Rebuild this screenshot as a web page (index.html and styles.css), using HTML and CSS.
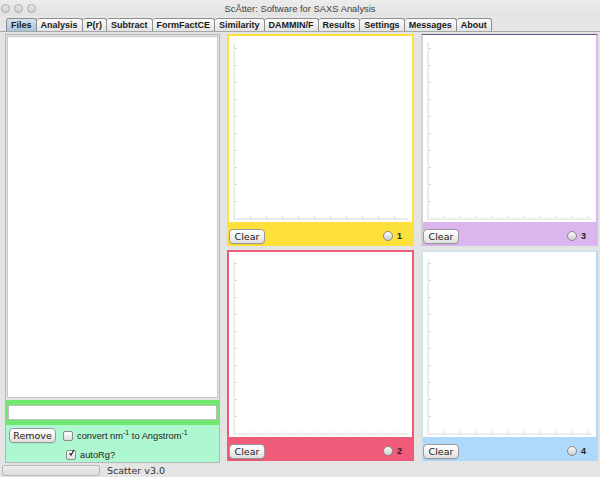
FILE: index.html
```html
<!DOCTYPE html>
<html>
<head>
<meta charset="utf-8">
<link rel="stylesheet" href="styles.css">
</head>
<body>
<div class="window">
  <div class="titlebar">
    <div class="lights"><span class="light"></span><span class="light"></span><span class="light"></span></div>
    <div class="title">ScÅtter: Software for SAXS Analysis</div>
    <div></div>
  </div>
  <div class="tabs">
    <div class="tab active">Files</div>
    <div class="tab">Analysis</div>
    <div class="tab">P(r)</div>
    <div class="tab">Subtract</div>
    <div class="tab">FormFactCE</div>
    <div class="tab">Similarity</div>
    <div class="tab">DAMMIN/F</div>
    <div class="tab">Results</div>
    <div class="tab">Settings</div>
    <div class="tab">Messages</div>
    <div class="tab">About</div>
  </div>
  <div class="main">
    <div class="files">
      <div class="list"></div>
      <div class="fieldstrip"><div class="field"></div></div>
      <div class="controls">
        <div class="row">
          <button class="btn remove">Remove</button>
          <span class="check"></span>
          <span class="label">convert nm<sup>-1</sup> to Angstrom<sup>-1</sup></span>
        </div>
        <div class="row row2">
          <span class="check checked"><svg width="10" height="10" viewBox="0 0 10 10"><path d="M2 5 L4.2 8 L8.5 0.5" fill="none" stroke="#222" stroke-width="1.6"/></svg></span>
          <span class="label">autoRg?</span>
        </div>
      </div>
    </div>
    <div class="charts">
      <div class="panel yellow">
        <div class="plot"><div class="axes"></div></div>
        <div class="bar"><button class="btn clear">Clear</button><span class="radio"></span><span class="num">1</span></div>
      </div>
      <div class="panel purple">
        <div class="plot"><div class="axes"></div></div>
        <div class="bar"><button class="btn clear">Clear</button><span class="radio"></span><span class="num">3</span></div>
      </div>
      <div class="panel pink">
        <div class="plot"><div class="axes"></div></div>
        <div class="bar"><button class="btn clear">Clear</button><span class="radio"></span><span class="num">2</span></div>
      </div>
      <div class="panel blue">
        <div class="plot"><div class="axes"></div></div>
        <div class="bar"><button class="btn clear">Clear</button><span class="radio"></span><span class="num">4</span></div>
      </div>
    </div>
  </div>
  <div class="status">
    <div class="progress"></div>
    <div class="version">Scatter v3.0</div>
  </div>
</div>
</body>
</html>
```
FILE: styles.css
```css
html, body {
  margin: 0;
  padding: 0;
}
body {
  width: 600px;
  height: 477px;
  overflow: hidden;
  background: #e4e4e4;
  font-family: "Liberation Sans", "DejaVu Sans", sans-serif;
  color: #222;
}
.window {
  display: flex;
  flex-direction: column;
  height: 477px;
}
.titlebar {
  height: 16px;
  display: grid;
  grid-template-columns: 60px 1fr 60px;
  align-items: center;
  background: linear-gradient(#ececec, #e2e2e2);
}
.lights {
  display: flex;
  gap: 4px;
  padding-left: 1px;
}
.light {
  width: 7px;
  height: 7px;
  border-radius: 50%;
  border: 1px solid #a9a9a9;
  background: linear-gradient(#e8e8e8, #cfcfcf);
}
.title {
  text-align: center;
  font-size: 9.4px;
  color: #444;
}
.tabs {
  height: 15px;
  display: flex;
  align-items: flex-end;
  padding-left: 6px;
  border-bottom: 1px solid #a6a6a6;
  background: #e6e6e6;
}
.tab {
  height: 13px;
  line-height: 12px;
  box-sizing: border-box;
  padding: 0 4px;
  font-size: 9px;
  font-weight: bold;
  color: #1a1a1a;
  border: 1px solid #8e8e8e;
  border-bottom: none;
  border-left: none;
  border-radius: 3px 3px 0 0;
  background: linear-gradient(#fbfbfb, #e3e3e3);
}
.tab:first-child {
  border-left: 1px solid #8e8e8e;
}
.tab.active {
  background: linear-gradient(#d5e3f0, #a9c3db);
}
.main {
  flex: 1;
  display: flex;
  gap: 7px;
  padding: 2px 2px 0 5px;
  min-height: 0;
}
.files {
  width: 215px;
  height: 429px;
  box-sizing: border-box;
  display: flex;
  flex-direction: column;
  border: 1px solid #b6b6b6;
  background: #e4e4e4;
}
.list {
  flex: 1;
  margin: 1px 1px 2px 1px;
  background: #fff;
  border: 1px solid #c8c8c8;
}
.fieldstrip {
  background: #6fe86f;
  padding: 5px 2px 5px 2px;
}
.field {
  height: 13px;
  background: #fff;
  border: 1px solid #bdbdbd;
}
.controls {
  box-sizing: border-box;
  background: #aef8d1;
  height: 37px;
  padding: 3px 0 0 3px;
  display: flex;
  flex-direction: column;
  gap: 4px;
}
.row {
  display: flex;
  align-items: center;
  height: 15px;
}
.row2 {
  padding-left: 57px;
}
.btn {
  font-family: "DejaVu Sans", "Liberation Sans", sans-serif;
  font-size: 9.5px;
  color: #222;
  height: 15px;
  padding: 0;
  box-sizing: border-box;
  border: 1px solid #9a9a9a;
  border-radius: 4px;
  background: linear-gradient(#ffffff, #f2f2f2 50%, #dedede);
  box-shadow: 0 1px 0 rgba(0,0,0,0.08);
}
.remove {
  width: 47px;
  margin-right: 7px;
}
.check {
  width: 10px;
  height: 10px;
  box-sizing: border-box;
  border: 1px solid #8c8c8c;
  border-radius: 2px;
  background: linear-gradient(#ffffff, #dcdcdc);
  margin-right: 4px;
  display: flex;
  align-items: center;
  justify-content: center;
}
.check svg {
  margin-top: -3px;
  margin-left: 1px;
}
.label {
  font-size: 9.3px;
  color: #222;
}
.label sup {
  font-size: 7px;
  line-height: 0;
}
.charts {
  display: grid;
  grid-template-columns: 187px 177px;
  grid-template-rows: 212px 211px;
  column-gap: 7px;
  row-gap: 4px;
}
.panel {
  display: flex;
  flex-direction: column;
  border: 2px solid;
  box-sizing: border-box;
}
.yellow { border-color: #fce23a; }
.yellow .bar { background: #fde03a; }
.purple { border-color: #dbb6ef; }
.purple .bar { background: #dab5ee; }
.pink { border-color: #ee5b78; }
.pink .bar { background: #ef5b79; }
.blue { border-color: #aed9fa; }
.blue .bar { background: #aed9fb; }
.purple { border-top-color: #6a4e8a; border-top-width: 1px; border-left-color: #d4cfdc; }
.blue { border-top-color: #cfe3ee; border-left-color: #cfe3ee; }
.plot {
  flex: 1;
  background: #fff;
  padding: 7px 4px 2px 4px;
  display: flex;
}
.axes {
  flex: 1;
  border-left: 2px solid #ececec;
  border-bottom: 2px solid #ececec;
  background:
    repeating-linear-gradient(to top, transparent 0 16px, #d2d2d2 16px 17px) left bottom / 2px 100% no-repeat,
    repeating-linear-gradient(to right, transparent 0 15px, #d6d6d6 15px 16px) left bottom / 100% 2px no-repeat;
}
.bar {
  height: 22px;
  display: flex;
  align-items: flex-end;
  padding: 0 10px 0 0;
}
.clear {
  width: 36px;
  margin-bottom: 0;
}
.radio {
  margin-left: auto;
  width: 10px;
  height: 10px;
  box-sizing: border-box;
  border-radius: 50%;
  border: 1px solid #8a8a8a;
  background: linear-gradient(#fafafa, #cfcfcf);
  margin-bottom: 3px;
  margin-right: 4px;
}
.num {
  font-size: 9px;
  font-weight: bold;
  line-height: 12px;
  margin-bottom: 2px;
}
.status {
  height: 14px;
  display: flex;
  align-items: center;
  gap: 7px;
  padding-left: 2px;
  background: #e4e4e4;
}
.progress {
  width: 96px;
  height: 9px;
  border: 1px solid #b8b8b8;
  border-radius: 2px;
  background: linear-gradient(#eeeeee, #dcdcdc);
}
.version {
  font-family: "DejaVu Sans", sans-serif;
  font-size: 9.5px;
  color: #333;
}
```
